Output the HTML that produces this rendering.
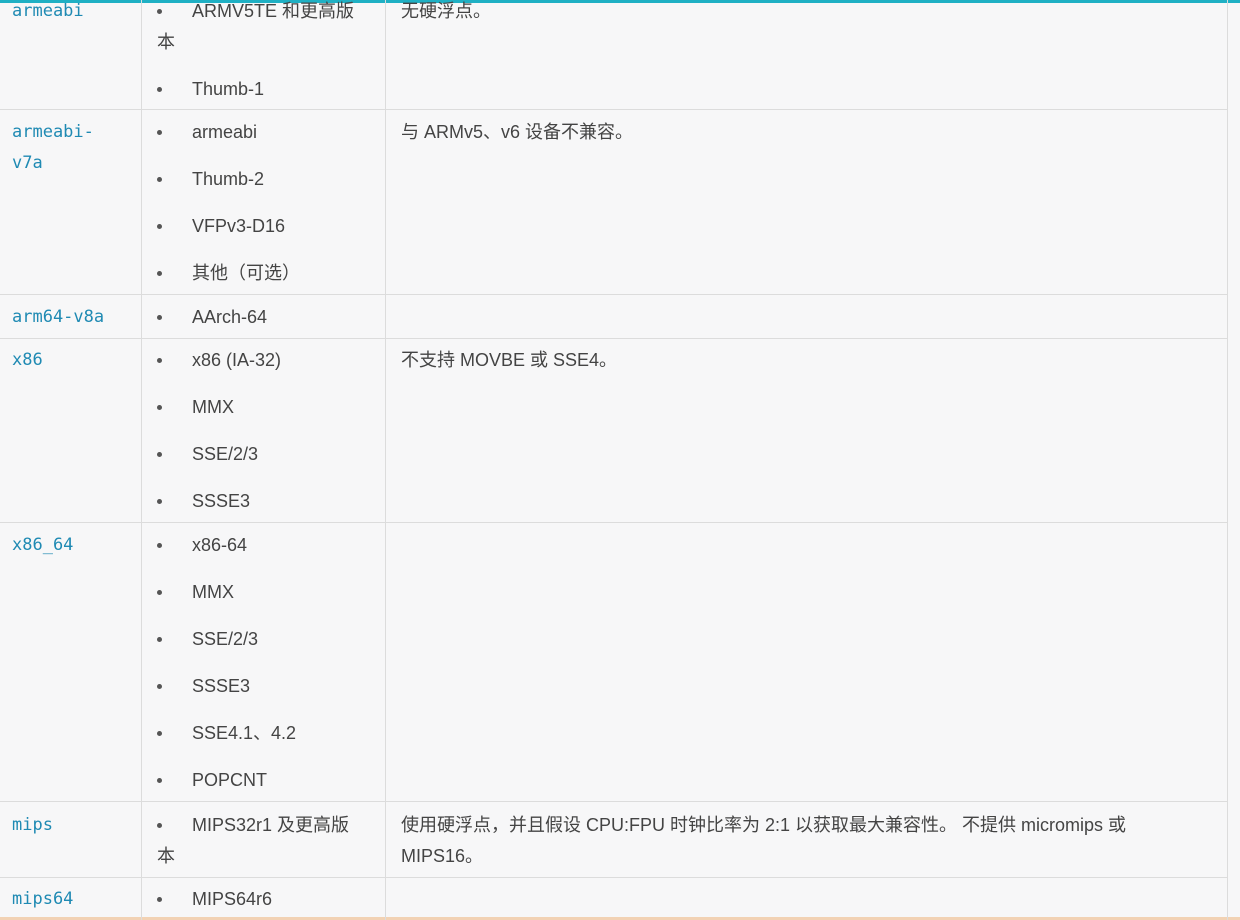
<!DOCTYPE html>
<html><head><meta charset="utf-8"><style>
html,body{margin:0;padding:0;width:1240px;height:920px;overflow:hidden;background:#f7f7f8;}
body{position:relative;font-family:"Liberation Sans","Noto Sans CJK SC",sans-serif;font-size:18px;color:#444;}
.t{position:absolute;line-height:30px;white-space:nowrap;margin-top:1px;}
.c{font-family:"DejaVu Sans Mono","Liberation Mono",monospace;color:#1f8ab3;font-size:17px;left:12px;}
.b{left:192px;}
.b::before{content:"";position:absolute;left:-35px;top:13px;width:5px;height:5px;border-radius:50%;background:#555;}
.d{left:401px;}
.h{position:absolute;left:0;width:1228px;height:1px;background:#dcdcdc;}
.v{position:absolute;top:0;width:1px;height:920px;background:#dcdcdc;}
</style></head><body>
<div style="position:absolute;left:0;top:0;width:1240px;height:3px;background:#1fb0c4"></div>
<div style="position:absolute;left:0;top:917px;width:1240px;height:3px;background:#f2d2b4"></div>
<div class="v" style="left:141px"></div>
<div class="v" style="left:385px"></div>
<div class="v" style="left:1227px"></div>
<div class="h" style="top:109px"></div>
<div class="h" style="top:294px"></div>
<div class="h" style="top:338px"></div>
<div class="h" style="top:522px"></div>
<div class="h" style="top:801px"></div>
<div class="h" style="top:877px"></div>

<div class="t c" style="top:-5px">armeabi</div>
<div class="t c" style="top:116px">armeabi-</div>
<div class="t c" style="top:147px">v7a</div>
<div class="t c" style="top:301px">arm64-v8a</div>
<div class="t c" style="top:344px">x86</div>
<div class="t c" style="top:529px">x86_64</div>
<div class="t c" style="top:809px">mips</div>
<div class="t c" style="top:883px">mips64</div>

<div class="t b" style="top:-5px">ARMV5TE 和更高版</div>
<div class="t" style="left:157px;top:26px">本</div>
<div class="t b" style="top:73px">Thumb-1</div>
<div class="t b" style="top:116px">armeabi</div>
<div class="t b" style="top:163px">Thumb-2</div>
<div class="t b" style="top:210px">VFPv3-D16</div>
<div class="t b" style="top:257px">其他（可选）</div>
<div class="t b" style="top:301px">AArch-64</div>
<div class="t b" style="top:344px">x86 (IA-32)</div>
<div class="t b" style="top:391px">MMX</div>
<div class="t b" style="top:438px">SSE/2/3</div>
<div class="t b" style="top:485px">SSSE3</div>
<div class="t b" style="top:529px">x86-64</div>
<div class="t b" style="top:576px">MMX</div>
<div class="t b" style="top:623px">SSE/2/3</div>
<div class="t b" style="top:670px">SSSE3</div>
<div class="t b" style="top:717px">SSE4.1、4.2</div>
<div class="t b" style="top:764px">POPCNT</div>
<div class="t b" style="top:809px">MIPS32r1 及更高版</div>
<div class="t" style="left:157px;top:840px">本</div>
<div class="t b" style="top:883px">MIPS64r6</div>

<div class="t d" style="top:-5px">无硬浮点。</div>
<div class="t d" style="top:116px">与 ARMv5、v6 设备不兼容。</div>
<div class="t d" style="top:344px">不支持 MOVBE 或 SSE4。</div>
<div class="t d" style="top:809px">使用硬浮点，并且假设 CPU:FPU 时钟比率为 2:1 以获取最大兼容性。 不提供 micromips 或</div>
<div class="t d" style="top:840px">MIPS16。</div>
</body></html>
